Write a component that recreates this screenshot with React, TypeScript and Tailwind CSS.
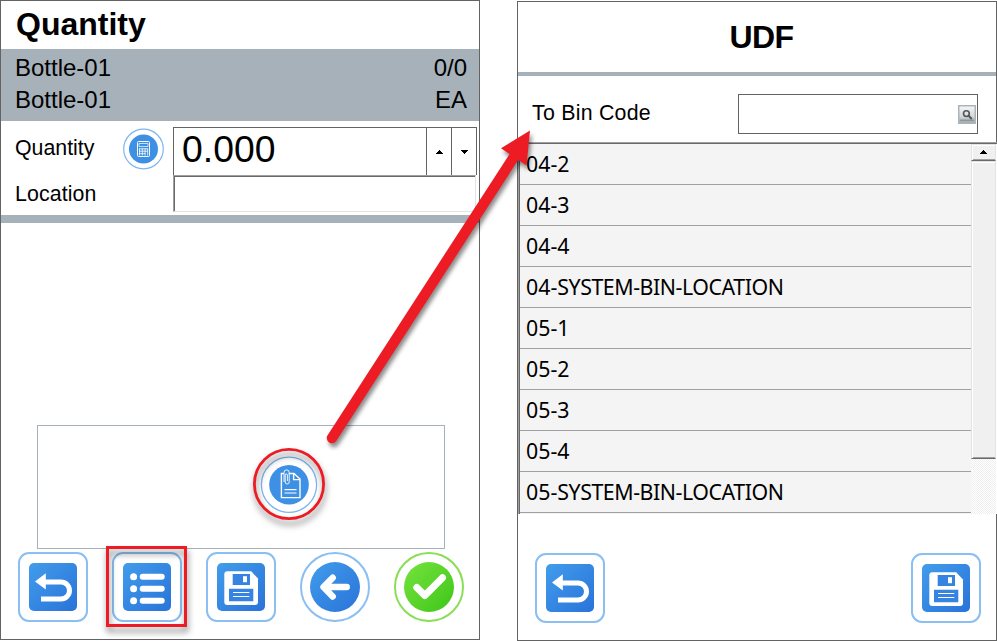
import type { ReactNode } from "react";

const bins = [
  ["04-", "2"],
  ["04-", "3"],
  ["04-", "4"],
  ["04-", "SYSTEM-BIN-LOCATION"],
  ["05-", "1"],
  ["05-", "2"],
  ["05-", "3"],
  ["05-", "4"],
  ["05-", "SYSTEM-BIN-LOCATION"],
];

function SquareButton({ label, children }: { label: string; children: ReactNode }) {
  return (
    <button
      aria-label={label}
      className="flex size-[70px] shrink-0 items-center justify-center rounded-[11px] border-2 border-[#8abff2] bg-white"
    >
      <span className="flex size-12 items-center justify-center rounded-[5px] bg-linear-to-br from-[#429ceb] to-[#2a73d9]">
        <svg viewBox="0 0 48 48" className="size-12" fill="none">
          {children}
        </svg>
      </span>
    </button>
  );
}

function BackButton() {
  return (
    <SquareButton label="Back">
      <path d="M6 18.5 16.8 10.3V26.5Z" fill="#fff" />
      <path d="M16 19H32a8.5 8.5 0 0 1 0 17H12" stroke="#fff" strokeWidth="5" />
    </SquareButton>
  );
}

function ListButton() {
  return (
    <SquareButton label="List">
      {[13.7, 25.7, 37.7].map((y) => (
        <g key={y}>
          <circle cx="10.6" cy={y} r="3.5" fill="#fff" />
          <path d={`M19.7 ${y}H38.7`} stroke="#fff" strokeWidth="6" strokeLinecap="round" />
        </g>
      ))}
    </SquareButton>
  );
}

function SaveButton() {
  return (
    <SquareButton label="Save">
      <path
        d="M10.3 8.3H34.2L41 15.5V39a3 3 0 0 1-3 3H10.3a3 3 0 0 1-3-3V11.3a3 3 0 0 1 3-3Z"
        fill="#fff"
      />
      <path d="M15.7 11H33V22H15.7Z M12 25.7H36.3V38.3H12Z" fill="#3684e1" />
      <path d="M26 13.2h4v6h-4Z" fill="#fff" />
      <path d="M16 29.5H32.3M16 33.5H32.3" stroke="#fff" strokeWidth="1.2" />
    </SquareButton>
  );
}

function DropArrow({ up }: { up?: boolean }) {
  return (
    <svg viewBox="0 0 8 4" className="h-1 w-2" shapeRendering="crispEdges">
      <path d={up ? "M0 4 4 0 8 4Z" : "M0 0 4 4 8 0Z"} fill="#000" />
    </svg>
  );
}

function QuantityPanel() {
  return (
    <section className="flex h-[640px] w-[480px] shrink-0 flex-col border border-[#636363] bg-white">
      <h1 className="h-12 pl-[15px] text-[32px] leading-[46px] font-bold">Quantity</h1>
      <div className="h-[72px] bg-[#a7b1b9] pt-[3px] pr-3 pl-3.5 text-[24px] leading-8">
        <div className="flex justify-between">
          <span>Bottle-01</span>
          <span>0/0</span>
        </div>
        <div className="flex justify-between">
          <span>Bottle-01</span>
          <span>EA</span>
        </div>
      </div>
      <div className="flex h-[94px] pt-[6px] pr-[2px]">
        <div className="flex w-[172px] shrink-0 flex-col pl-3.5 text-[21.33px]">
          <div className="flex h-[46px] items-center justify-between pr-2">
            <span className="pb-[3px]">Quantity</span>
            <svg viewBox="0 0 42 42" className="mb-[3px] size-[42px]" fill="none">
              <circle cx="20.5" cy="21" r="19.8" stroke="#7db7ef" strokeWidth="1.2" />
              <circle cx="20.5" cy="21" r="14.5" fill="#3d90e3" />
              <rect x="14.5" y="13.5" width="12" height="15" rx="1" stroke="#fff" />
              <path d="M16 15.5h9v3h-9Z" stroke="#fff" strokeWidth=".7" />
              <path
                d="M16.5 20.5v7M19.3 20.5v7M22.1 20.5v7M24.7 20.5v7M16 20.8h9M16 23.2h9M16 25.7h6.2"
                stroke="#fff"
                strokeWidth=".8"
              />
            </svg>
          </div>
          <span className="leading-[42px] tracking-[0.1px]">Location</span>
        </div>
        <div className="flex grow flex-col">
          <div className="flex h-12 border-x border-t border-[#636363]">
            <span className="grow pl-2 text-[37.33px] leading-[43px]">0.000</span>
            <button aria-label="Increase" className="flex w-[25px] items-center justify-center border-l border-[#636363]">
              <DropArrow up />
            </button>
            <button aria-label="Decrease" className="flex w-[25px] items-center justify-center border-l border-[#636363]">
              <DropArrow />
            </button>
          </div>
          <div className="mr-px h-[37px] border-t border-r border-b border-l border-t-[#a0a0a0] border-r-[#e3e3e3] border-b-[#e3e3e3] border-l-[#a0a0a0]">
            <div className="h-full border-t border-l border-[#696969]" />
          </div>
        </div>
      </div>
      <div className="h-2 bg-[#a7b1b9]" />
      <div className="mt-[202px] ml-9 flex h-[124px] w-[408px] border border-[#a7b1b9] pt-[30px] pl-[222px]">
        <svg viewBox="0 0 58 58" className="size-[58px]" fill="none">
          <circle cx="29" cy="28.7" r="27.6" stroke="#7db7ef" strokeWidth="1.3" />
          <circle cx="29" cy="28.7" r="19.8" fill="#3d90e3" />
          <path d="M24 17.5H21.4V41.6H40V23L34 17.5H28.8M33.6 17.8V23.6H40" stroke="#fff" strokeWidth="1.4" />
          <path d="M24.5 33.7H36.5M24.5 37H36.5" stroke="#fff" strokeWidth="1.2" />
          <path
            d="M24 26V16.5a2.6 2.6 0 0 1 5.2 0V26a2 2 0 0 1-4 0V19a1.1 1.1 0 0 1 2.2 0v6"
            stroke="#fff"
            strokeWidth=".9"
          />
        </svg>
      </div>
      <div className="mt-[3px] flex gap-6 pl-[17px]">
        <BackButton />
        <ListButton />
        <SaveButton />
        <button aria-label="Previous" className="flex size-[70px] items-center justify-center rounded-full border-2 border-[#8abff2]">
          <span className="size-[50px] rounded-full bg-linear-to-br from-[#429ceb] to-[#2a73d9]">
            <svg viewBox="0 0 50 50" className="size-[50px]" fill="none">
              <path
                d="M22.7 15.7 13.5 25l9.2 9.5M14 25H36.7"
                stroke="#fff"
                strokeWidth="6.5"
                strokeLinecap="round"
                strokeLinejoin="round"
              />
            </svg>
          </span>
        </button>
        <button aria-label="Confirm" className="flex size-[70px] items-center justify-center rounded-full border-2 border-[#88df55]">
          <span className="size-[50px] rounded-full bg-linear-to-br from-[#74e33d] to-[#3cc614]">
            <svg viewBox="0 0 50 50" className="size-[50px]" fill="none">
              <path
                d="M12.8 25.5 20.8 33.5 38.5 15.8"
                stroke="#fff"
                strokeWidth="7"
                strokeLinecap="round"
                strokeLinejoin="round"
              />
            </svg>
          </span>
        </button>
      </div>
    </section>
  );
}

function UdfPanel() {
  return (
    <section className="mt-px flex h-[640px] w-[480px] shrink-0 flex-col bg-white">
      <div className="flex h-[141px] flex-col border-x border-t border-[#636363]">
        <h2 className="h-[70px] pl-[9px] text-center text-[32px] leading-[70px] font-bold tracking-[-0.6px]">UDF</h2>
        <div className="h-1 bg-[#a7b1b9]" />
        <div className="flex justify-between pt-[18px] pr-[18px] pl-3.5">
          <span className="text-[21.33px] leading-[38px] tracking-[0.25px]">To Bin Code</span>
          <div className="flex h-10 w-[240px] items-center justify-end border border-[#636363] pr-px">
            <svg viewBox="0 0 18 19" className="size-[19px] w-[18px]" fill="none">
              <defs>
                <linearGradient id="lookup" x1="0" y1="0" x2="0" y2="1">
                  <stop offset="0" stopColor="#f6f7f8" />
                  <stop offset=".6" stopColor="#d5d9dc" />
                  <stop offset="1" stopColor="#a0a6aa" />
                </linearGradient>
              </defs>
              <rect x=".75" y=".75" width="16.5" height="17.5" fill="url(#lookup)" stroke="#a9b4bc" strokeWidth="1.5" />
              <path d="M2 15.2H16" stroke="#7e8588" />
              <circle cx="8.4" cy="8.6" r="2.9" stroke="#555" strokeWidth="1.6" />
              <path d="m10.6 10.8 3.2 3.2" stroke="#555" strokeWidth="2" />
            </svg>
          </div>
        </div>
      </div>
      <div className="flex h-[372px] border-t border-l border-t-[#a0a0a0] border-l-[#636363]">
        <div className="flex grow border-t border-l border-t-[#696969] border-l-[#a0a0a0]">
          <div className="grow overflow-hidden border-l border-[#696969] bg-[#f4f4f4]">
            {bins.map(([zone, name]) => (
              <div
                key={zone + name}
                className="h-[41px] border-b border-[#a0a0a0] pl-[6px] font-['Noto_Sans',sans-serif] text-[21.33px] leading-[39px] whitespace-nowrap"
              >
                {zone}
                <span className="tracking-[-0.44px]">{name}</span>
              </div>
            ))}
          </div>
          <div className="w-[26px] shrink-0 border-r border-white bg-[repeating-conic-gradient(#efefef_0_25%,#ffffff_0_50%)] bg-size-[2px_2px]">
            <div className="flex h-[17px] items-center justify-center border-t border-r border-b border-l border-t-[#e3e3e3] border-r-[#e3e3e3] border-b-[#696969] border-l-[#e3e3e3] bg-[#f0f0f0] pr-px pb-px shadow-[inset_1px_1px_0_#fff,inset_0_-1px_0_#a0a0a0]">
              <DropArrow up />
            </div>
            <div className="h-[298px] border-t border-r border-b border-l border-t-[#e3e3e3] border-r-[#e3e3e3] border-b-[#696969] border-l-[#e3e3e3] bg-[#f0f0f0] shadow-[inset_1px_1px_0_#fff,inset_0_-1px_0_#a0a0a0]" />
          </div>
        </div>
      </div>
      <div className="flex grow items-start justify-between border-x border-b border-[#636363] pt-[39px] pr-[15px] pl-[17px]">
        <BackButton />
        <SaveButton />
      </div>
    </section>
  );
}

export default function App() {
  return (
    <main className="relative flex h-[641px] w-[997px] gap-[37px] overflow-hidden bg-white font-['Liberation_Sans',Arial,sans-serif] text-black">
      <QuantityPanel />
      <UdfPanel />
      <svg viewBox="0 0 997 641" className="pointer-events-none absolute inset-0 h-[641px] w-[997px]" fill="none">
        <g className="drop-shadow-[1px_5px_3px_rgba(0,0,0,0.5)]">
          <circle cx="289" cy="484" r="34.6" stroke="#ed1c24" strokeWidth="2.8" />
          <rect x="107.5" y="547.5" width="78" height="78" stroke="#ed1c24" strokeWidth="3" />
        </g>
        <g className="drop-shadow-[2px_4px_2px_rgba(0,0,0,0.45)]">
          <path d="M332 438 514.5 156" stroke="#ed1c24" strokeWidth="10.5" strokeLinecap="round" />
          <path d="M530 130.5 501 148.3 526.5 165.5Z" fill="#ed1c24" />
        </g>
      </svg>
    </main>
  );
}
